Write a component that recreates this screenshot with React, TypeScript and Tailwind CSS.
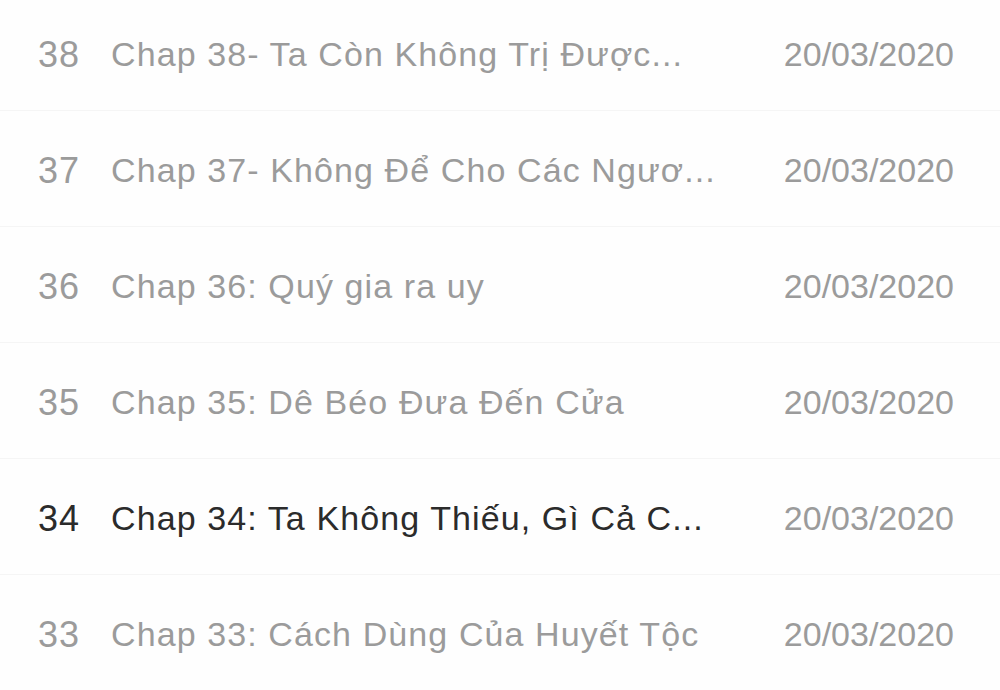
const chapters = [
  { no: 38, title: "Chap 38- Ta Còn Không Trị Được...", date: "20/03/2020" },
  { no: 37, title: "Chap 37- Không Để Cho Các Ngươ...", date: "20/03/2020" },
  { no: 36, title: "Chap 36: Quý gia ra uy", date: "20/03/2020" },
  { no: 35, title: "Chap 35: Dê Béo Đưa Đến Cửa", date: "20/03/2020" },
  { no: 34, title: "Chap 34: Ta Không Thiếu, Gì Cả C...", date: "20/03/2020", read: true },
  { no: 33, title: "Chap 33: Cách Dùng Của Huyết Tộc", date: "20/03/2020" },
];

export default function App() {
  return (
    <div className="h-[690px] w-[1000px] overflow-hidden bg-[#fefefe] font-['Liberation_Sans',Arial,sans-serif]">
      <ul className="-mt-[5px]">
        {chapters.map((c) => (
          <li
            key={c.no}
            className="flex h-[116px] items-center border-b border-[#f5f5f5] pl-[38px] pr-[46px] pt-[4px] text-[34px]"
          >
            <span
              className={`w-[73px] shrink-0 text-[36px] tracking-[1px] ${
                c.read ? "text-[#2b2b2b]" : "text-[#9b9b9b]"
              }`}
            >
              {c.no}
            </span>
            <span
              className={`min-w-0 flex-1 whitespace-nowrap tracking-[1.1px] ${
                c.read ? "text-[#2b2b2b]" : "text-[#9b9b9b]"
              }`}
            >
              {c.title}
            </span>
            <span className="shrink-0 text-[#9b9b9b]">{c.date}</span>
          </li>
        ))}
      </ul>
    </div>
  );
}
